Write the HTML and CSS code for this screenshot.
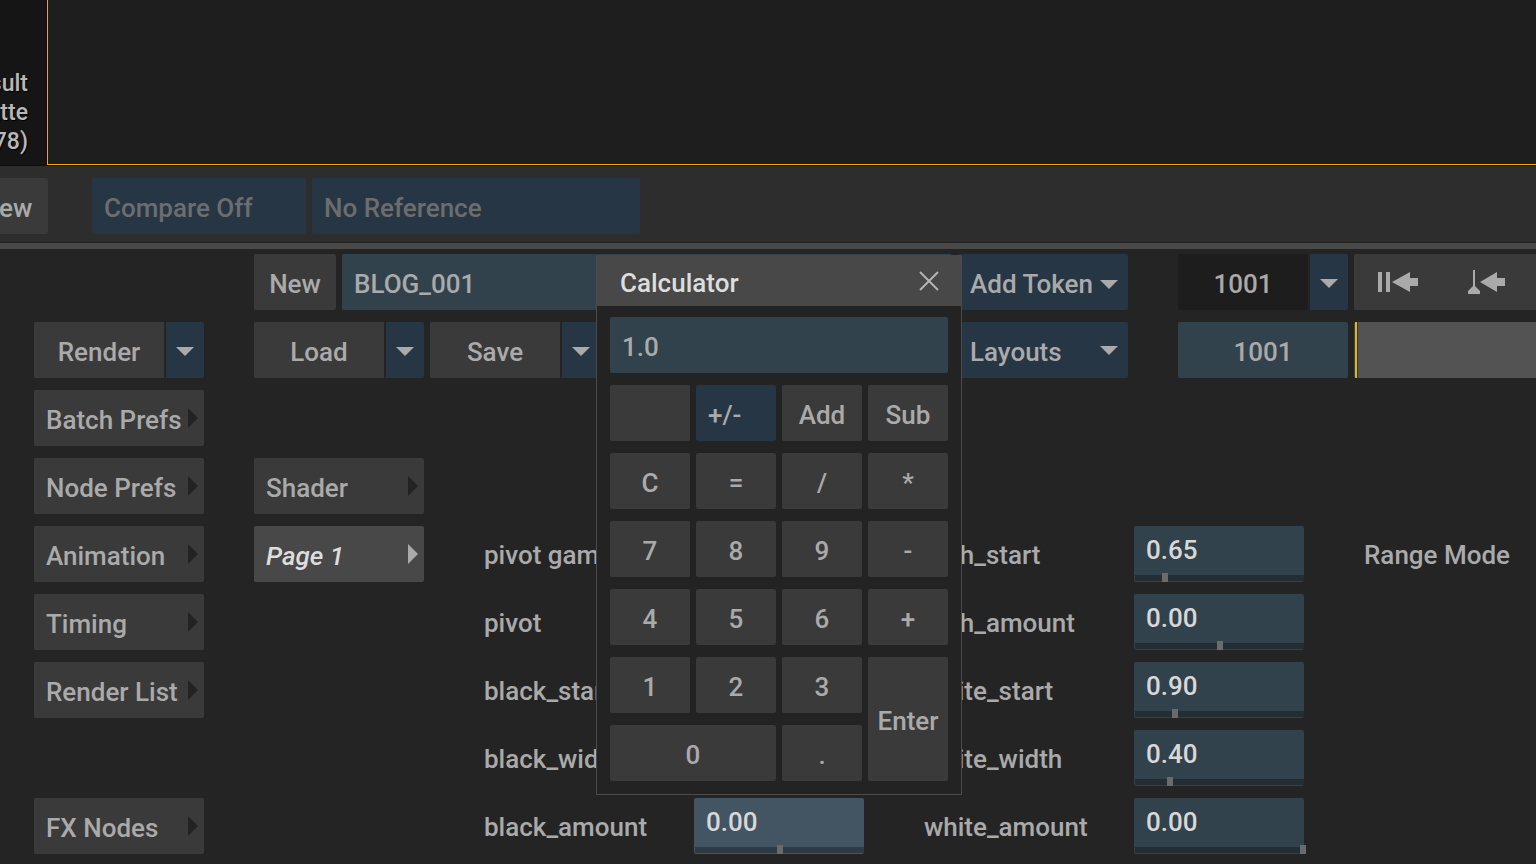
FILE: index.html
```html
<!DOCTYPE html>
<html lang="en">
<head>
  <meta charset="UTF-8">
  <title>Batch</title>
  <link rel="stylesheet" href="styles.css">
</head>
<body>

  <div class="viewer">
    <div class="viewer-info">
      <span>Result</span>
      <span>Matte</span>
      <span>(1.78)</span>
    </div>
    <div class="viewport"></div>
  </div>

  <div class="toolbar">
    <button class="btn view-btn">View</button>
    <select class="menu compare" aria-label="Compare" disabled><option>Compare Off</option></select>
    <select class="menu reference" aria-label="Reference" disabled><option>No Reference</option></select>
  </div>

  <div class="panel">
    <div class="sidebar">
      <div class="split render">
        <button class="btn">Render</button>
        <button class="btn drop" aria-label="Render options"><svg class="caret" viewBox="0 0 18 9"><path d="M0 0h18L9 9z"/></svg></button>
      </div>
      <button class="btn tab">Batch Prefs</button>
      <button class="btn tab">Node Prefs</button>
      <button class="btn tab">Animation</button>
      <button class="btn tab">Timing</button>
      <button class="btn tab">Render List</button>
      <button class="btn tab fx">FX Nodes</button>
    </div>

    <div class="main">
      <div class="top-row">
        <div class="group">
          <button class="btn new-btn">New</button>
          <input class="field name" type="text" value="BLOG_001" aria-label="Setup name">
          <button class="btn menu token">Add Token <svg class="caret" viewBox="0 0 18 9"><path d="M0 0h18L9 9z"/></svg></button>
        </div>
        <div class="split">
          <input class="field frame dark" type="text" value="1001" aria-label="Current frame">
          <button class="btn drop" aria-label="Frame options"><svg class="caret" viewBox="0 0 18 9"><path d="M0 0h18L9 9z"/></svg></button>
        </div>
        <div class="transport">
          <button class="icon-btn" aria-label="Go to start">
            <svg width="40" height="24" viewBox="0 0 40 24"><path d="M0 2h4v20H0zM8 2h4v20H8zM14 12L32 2v6h8v8h-8v6z"/></svg>
          </button>
          <button class="icon-btn" aria-label="Previous keyframe">
            <svg width="38" height="24" viewBox="0 0 38 24"><path d="M5 0h2v16l5 5v3H0v-3l5-5zM12 12L29 2v6h8v8h-8v6z"/></svg>
          </button>
        </div>
      </div>

      <div class="top-row">
        <div class="group">
          <div class="split">
            <button class="btn">Load</button>
            <button class="btn drop" aria-label="Load options"><svg class="caret" viewBox="0 0 18 9"><path d="M0 0h18L9 9z"/></svg></button>
          </div>
          <div class="split">
            <button class="btn">Save</button>
            <button class="btn drop" aria-label="Save options"><svg class="caret" viewBox="0 0 18 9"><path d="M0 0h18L9 9z"/></svg></button>
          </div>
          <div class="layouts">
            <select class="menu" aria-label="Layouts"><option>Layouts</option></select>
            <svg class="caret" viewBox="0 0 18 9"><path d="M0 0h18L9 9z"/></svg>
          </div>
        </div>
        <input class="field frame" type="text" value="1001" aria-label="Start frame">
        <div class="timeline"></div>
      </div>

      <div class="params">
        <div class="pages">
          <button class="btn tab">Shader</button>
          <button class="btn tab active">Page 1</button>
        </div>
        <div class="names">
          <label>pivot gamma</label>
          <label>pivot</label>
          <label>black_start</label>
          <label>black_width</label>
          <label for="black-amount">black_amount</label>
        </div>
        <div class="values">
          <div class="slider selected last">
            <input class="number" id="black-amount" type="text" value="0.00">
            <input class="range" type="range" value="50" aria-label="black_amount slider">
          </div>
        </div>
        <div class="names">
          <label for="high-start">high_start</label>
          <label for="high-amount">high_amount</label>
          <label for="white-start">white_start</label>
          <label for="white-width">white_width</label>
          <label for="white-amount">white_amount</label>
        </div>
        <div class="values">
          <div class="slider">
            <input class="number" id="high-start" type="text" value="0.65">
            <input class="range" type="range" value="17" aria-label="high_start slider">
          </div>
          <div class="slider">
            <input class="number" id="high-amount" type="text" value="0.00">
            <input class="range" type="range" value="50" aria-label="high_amount slider">
          </div>
          <div class="slider">
            <input class="number" id="white-start" type="text" value="0.90">
            <input class="range" type="range" value="23" aria-label="white_start slider">
          </div>
          <div class="slider">
            <input class="number" id="white-width" type="text" value="0.40">
            <input class="range" type="range" value="20" aria-label="white_width slider">
          </div>
          <div class="slider">
            <input class="number" id="white-amount" type="text" value="0.00">
            <input class="range" type="range" value="100" aria-label="white_amount slider">
          </div>
        </div>
        <div class="names">
          <label>Range Mode</label>
        </div>
      </div>

      <div class="calculator">
        <div class="calc-title">
          <span>Calculator</span>
          <button class="close" aria-label="Close">
            <svg width="20" height="20" viewBox="0 0 20 20"><path d="M1 1l18 18M19 1L1 19"/></svg>
          </button>
        </div>
        <div class="calc-body">
          <input class="field display" type="text" value="1.0" aria-label="Value">
          <button class="btn" aria-label="Blank"></button>
          <button class="btn menu">+/-</button>
          <button class="btn">Add</button>
          <button class="btn">Sub</button>
          <button class="btn">C</button>
          <button class="btn">=</button>
          <button class="btn">/</button>
          <button class="btn">*</button>
          <button class="btn">7</button>
          <button class="btn">8</button>
          <button class="btn">9</button>
          <button class="btn">-</button>
          <button class="btn">4</button>
          <button class="btn">5</button>
          <button class="btn">6</button>
          <button class="btn">+</button>
          <button class="btn">1</button>
          <button class="btn">2</button>
          <button class="btn">3</button>
          <button class="btn enter">Enter</button>
          <button class="btn zero">0</button>
          <button class="btn">.</button>
        </div>
      </div>
    </div>
  </div>

</body>
</html>
```
FILE: styles.css
```css
* {
  box-sizing: border-box;
}

body {
  margin: 0;
  height: 100vh;
  display: flex;
  flex-direction: column;
  overflow: hidden;
  background-color: #242424;
  color: #aaaaaa;
  font-family: Roboto, "Noto Sans", sans-serif;
  font-size: 26px;
  font-weight: 500;
  line-height: 32px;
}

button,
input,
select {
  margin: 0;
  border: none;
  border-radius: 2px;
  color: inherit;
  font: inherit;
}

svg {
  display: block;
  fill: #aaaaaa;
}

/* viewer */
.viewer {
  display: flex;
  height: 166px;
  flex-shrink: 0;
  border-bottom: 1px solid #0c0c0c;
  background-color: #151515;
}

.viewer-info {
  width: 47px;
  display: flex;
  flex-direction: column;
  align-items: flex-end;
  justify-content: flex-end;
  padding: 0 18px 9px 0;
  border-right: 1px solid #060606;
  overflow: hidden;
  color: #b8b8b8;
  font-size: 23px;
  line-height: 29px;
  text-shadow: 1px 1px 1px #000;
}

.viewport {
  flex: 1;
  border-left: 1px solid #f5a800;
  border-bottom: 1px solid #f5a800;
  background-color: #1e1e1e;
}

.toolbar {
  display: flex;
  flex-shrink: 0;
  gap: 6px;
  padding: 12px 0 8px;
  background-color: #2d2d2d;
  border-bottom: 1px solid #202020;
}

.view-btn {
  width: 88px;
  margin: 0 38px 0 -40px;
}

.compare {
  width: 214px;
}

.reference {
  width: 328px;
}

/* controls */
.btn {
  height: 56px;
  padding: 4px 0 0;
  background-color: #3a3a3a;
  text-align: center;
}

.menu {
  height: 56px;
  padding: 4px 12px 0;
  appearance: none;
  background-color: #263645;
  text-align: left;
}

.menu:disabled {
  color: #6d6d6d;
  opacity: 1;
}

.field {
  height: 56px;
  min-width: 0;
  padding: 4px 12px 0;
  background-color: #32424d;
}

.frame {
  width: 170px;
  text-align: center;
}

.dark {
  background-color: #1d1d1d;
}

.split {
  display: flex;
  gap: 2px;
  width: 170px;
}

.split > :first-child {
  width: 130px;
  border-radius: 2px 0 0 2px;
}

.drop {
  width: 38px;
  padding: 2px 0 0 10px;
  border-radius: 0 2px 2px 0;
  background-color: #263645;
}

.caret {
  width: 18px;
  height: 9px;
}

.tab {
  display: flex;
  align-items: center;
  justify-content: space-between;
  width: 170px;
  padding: 4px 6px 0 12px;
}

.tab::after {
  content: "";
  margin-bottom: 4px;
  border: 10px solid transparent;
  border-left-color: #232323;
  border-right: none;
}

.tab.active {
  background-color: #484848;
  color: #dddddd;
  font-style: italic;
}

.tab.active::after {
  border-left-color: #aaaaaa;
}

/* panel */
.panel {
  flex: 1;
  display: flex;
  gap: 50px;
  padding: 5px 0 0 34px;
  border-top: 6px solid #494949;
}

.sidebar {
  display: flex;
  flex-direction: column;
  gap: 12px;
}

.render {
  margin-top: 68px;
}

.fx {
  margin-top: 68px;
}

.main {
  position: relative;
  flex: 1;
  min-width: 0;
  display: flex;
  flex-direction: column;
  gap: 12px;
}

.top-row {
  display: grid;
  grid-template-columns: 874px 170px 1fr;
  column-gap: 50px;
}

.group {
  display: flex;
  gap: 6px;
}

.new-btn {
  width: 82px;
}

.name {
  flex: 1;
}

.token,
.layouts {
  width: 170px;
  display: flex;
  align-items: center;
  justify-content: space-between;
  white-space: nowrap;
}

.token {
  padding-right: 10px;
}

.layouts {
  position: relative;
  margin-left: auto;
}

.layouts .menu {
  width: 100%;
}

.layouts .caret {
  position: absolute;
  right: 10px;
}

.transport,
.timeline {
  margin-left: -44px;
  height: 56px;
  border-radius: 2px 0 0 2px;
}

.transport {
  display: flex;
  align-items: center;
  gap: 50px;
  padding-left: 24px;
  background-color: #3a3a3a;
}

.icon-btn {
  padding: 0;
  background: none;
}

.timeline {
  background: linear-gradient(to right, #444 1px, #dcb52a 1px 3px, #383838 3px 4px, #535353 4px);
}

.params {
  display: grid;
  grid-template-columns: repeat(5, 170px) 1fr;
  column-gap: 50px;
  padding-top: 68px;
}

.pages,
.names,
.values {
  display: flex;
  flex-direction: column;
  gap: 12px;
}

.names,
.values {
  padding-top: 68px;
}

.names label {
  height: 56px;
  padding: 13px 0 0 10px;
  white-space: nowrap;
}

.slider {
  height: 56px;
  border-radius: 2px;
  background-color: #32424d;
  color: #d8d8d8;
}

.slider.selected {
  background-color: #435563;
}

.slider.last {
  margin-top: auto;
}

.number {
  display: block;
  width: 100%;
  height: 47px;
  padding: 0 12px;
  background: none;
}

.range {
  appearance: none;
  display: block;
  width: 172px;
  height: 9px;
  border-radius: 0;
  background: linear-gradient(#232d34, #232d34) 1px 2px / 169px 6px no-repeat;
}

.selected .range {
  background-image: linear-gradient(#2e3b45, #2e3b45);
}

.range::-webkit-slider-thumb {
  appearance: none;
  width: 6px;
  height: 9px;
  background-color: #6b6b6b;
}

/* calculator */
.calculator {
  position: absolute;
  top: 1px;
  left: 342px;
  border: 1px solid #4b4b4b;
  border-top: none;
  border-radius: 2px 2px 0 0;
  background-color: #232323;
}

.calc-title {
  display: flex;
  align-items: center;
  justify-content: space-between;
  height: 51px;
  padding: 4px 22px 0 23px;
  background-color: #484848;
  color: #dddddd;
}

.close {
  padding: 0 0 4px;
  background: none;
}

.close svg {
  fill: none;
  stroke: #b4b4b4;
  stroke-width: 2;
}

.calc-body {
  display: grid;
  grid-template-columns: repeat(4, 80px);
  gap: 12px 6px;
  padding: 11px 13px 13px;
}

.display {
  grid-column: span 4;
}

.zero {
  grid-column: span 2;
}

.enter {
  grid-column: 4;
  grid-row: 6 / span 2;
  height: auto;
}
```
